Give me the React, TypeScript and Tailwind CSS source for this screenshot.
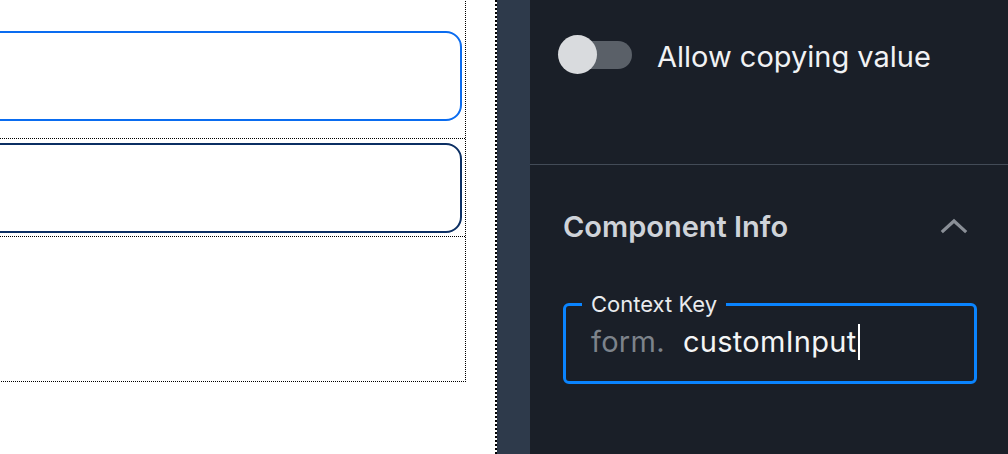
import React from "react";

function Toggle() {
  return (
    <div className="relative h-[39px] w-[74px] shrink-0">
      <div className="absolute left-[2px] right-0 top-[6px] h-[28px] rounded-full bg-[#5a6068]" />
      <div className="absolute left-0 top-0 h-[39px] w-[39px] rounded-full bg-[#d9dbde]" />
    </div>
  );
}

function ChevronUp() {
  return (
    <svg width="28" height="16" viewBox="0 0 28 16" fill="none">
      <polyline
        points="3,13 14,3 25,13"
        stroke="#8a8f97"
        strokeWidth="3.2"
        strokeLinecap="square"
      />
    </svg>
  );
}

function Canvas() {
  return (
    <div className="w-[497px] shrink-0 overflow-hidden border-r-2 border-dotted border-black bg-white">
      <div className="-ml-4 -mt-4 flex h-[398px] w-[482px] flex-col border border-dotted border-black">
        <div className="h-[153px] pr-[3px] pt-[46px]">
          <div className="h-[90px] rounded-2xl border-2 border-[#0a6cf0]" />
        </div>
        <div className="border-y border-dotted border-black pb-[3px] pr-[3px] pt-1">
          <div className="h-[90px] rounded-2xl border-2 border-[#0b2f63]" />
        </div>
      </div>
    </div>
  );
}

function Panel() {
  return (
    <div className="flex-1 bg-[#1a1f28] font-['Inter',sans-serif]">
      <div className="flex h-[165px] items-start gap-[25px] border-b border-[#434b57] pl-[28px] pt-[35px]">
        <Toggle />
        <span className="pt-[2px] text-[29px] leading-[39px] text-[#f1f2f4]">
          Allow copying value
        </span>
      </div>

      <div className="pl-[33px] pr-[31px] pt-[41px]">
        <div className="flex h-[40px] items-center justify-between pr-[9px]">
          <span className="text-[29px] font-semibold leading-none text-[#cfd3d9]">
            Component Info
          </span>
          <ChevronUp />
        </div>

        <fieldset className="mt-[47px] h-[91px] rounded-md border-[3px] border-[#0a84ff] px-[25px]">
          <legend className="-ml-[9px] px-[9px] text-[22px] leading-[22px] text-[#e9ebee]">
            Context Key
          </legend>
          <div className="flex items-center pt-[9px] text-[29px] leading-[36px] tracking-[0.3px]">
            <span className="text-[#7d838b]">form.</span>
            <span className="ml-[18px] text-[#f4f5f6]">customInput</span>
            <span className="ml-px inline-block h-[36px] w-[2px] bg-white" />
          </div>
        </fieldset>
      </div>
    </div>
  );
}

export default function App() {
  return (
    <div className="flex h-[454px] w-[1008px] overflow-hidden">
      <Canvas />
      <div className="w-[33px] shrink-0 bg-[#2e3a4b]" />
      <Panel />
    </div>
  );
}
